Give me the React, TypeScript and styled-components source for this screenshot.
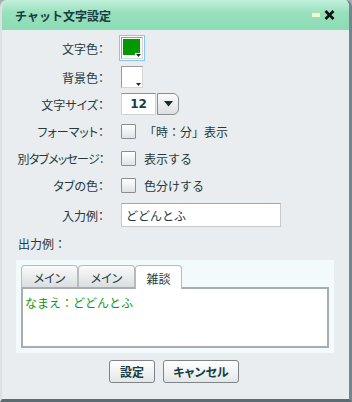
import * as React from "react";
import styled, { createGlobalStyle, css } from "styled-components";

const GlobalStyle = createGlobalStyle`
  html, body {
    margin: 0;
    padding: 0;
    background: #a2b0b4;
  }
  body {
    font-family: "Noto Sans CJK JP", "DejaVu Sans", sans-serif;
    font-size: 12px;
    color: #253a40;
  }
`;

const Window = styled.div`
  width: 352px;
  height: 402px;
  box-sizing: border-box;
  display: flex;
  flex-direction: column;
  background: #e9edf0;
  border-left: 2px solid #dde1e3;
  border-right: 3px solid #74858c;
  border-bottom: 3px solid #5b6b72;
  border-radius: 7px 7px 0 0;
  overflow: hidden;
`;

const TitleBar = styled.div`
  height: 30px;
  flex-shrink: 0;
  display: flex;
  align-items: center;
  padding: 1px 14px 0 13px;
  box-sizing: border-box;
  background: linear-gradient(#c2f0dc, #98e0bc 45%, #8cdcb4);
  border-bottom: 1px solid #9cd6b6;
`;

const Title = styled.div`
  flex: 1;
  font-size: 12px;
  font-weight: bold;
  color: #173c44;
`;

const Minimize = styled.div`
  width: 8px;
  height: 4px;
  background: #f6f8cc;
  margin-right: 4px;
`;

const Body = styled.div`
  display: flex;
  flex-direction: column;
  padding-top: 3px;
`;

const Form = styled.div`
  display: grid;
  grid-template-columns: 102px 1fr;
  column-gap: 17px;
`;

const Label = styled.div<{ $h: number; $tight?: boolean }>`
  height: ${(p) => p.$h}px;
  display: flex;
  align-items: center;
  justify-content: flex-end;
  white-space: nowrap;
  font-feature-settings: "palt";
  letter-spacing: ${(p) => (p.$tight ? "-0.8px" : "0")};
`;

const Field = styled.div<{ $h: number }>`
  height: ${(p) => p.$h}px;
  display: flex;
  align-items: center;
  gap: 8px;
`;

const Swatch = styled.div<{ $focused?: boolean }>`
  position: relative;
  width: 22px;
  height: 22px;
  box-sizing: border-box;
  border: 1px solid;
  border-color: #9a9a9a #d6d6d6 #d6d6d6 #9a9a9a;
  background: #fff;
  padding: 1px 2px 3px 1px;
  ${(p) =>
    p.$focused &&
    css`
      box-shadow: 0 0 0 1px #fff, 0 0 0 2px #86c6f2;
    `}
`;

const SwatchFill = styled.div<{ $color: string }>`
  width: 100%;
  height: 100%;
  background: ${(p) => p.$color};
`;

const SwatchArrow = styled.div`
  position: absolute;
  right: 0;
  bottom: 0;
  width: 7px;
  height: 5px;
  background: #fff;
  display: flex;
  align-items: center;
  justify-content: center;
`;

const Select = styled.div`
  display: flex;
  height: 22px;
`;

const SelectValue = styled.div`
  width: 35px;
  box-sizing: border-box;
  background: #fff;
  border: 1px solid #cfd3d5;
  border-top-color: #8e9294;
  display: flex;
  align-items: center;
  justify-content: center;
  font-family: "DejaVu Sans", sans-serif;
  font-weight: bold;
  font-size: 12px;
  color: #173c44;
`;

const SelectButton = styled.div`
  width: 22px;
  box-sizing: border-box;
  margin-left: 1px;
  border: 1px solid #8a8e90;
  border-radius: 0 6px 6px 0;
  background: linear-gradient(#fbfbfb, #dcdfe0);
  display: flex;
  align-items: center;
  justify-content: center;
`;

const Checkbox = styled.div`
  width: 15px;
  height: 15px;
  box-sizing: border-box;
  border: 1px solid #8a8e90;
  border-radius: 1px;
  background: linear-gradient(#ffffff, #dfe2e4);
`;

const TextInput = styled.div`
  width: 160px;
  height: 24px;
  box-sizing: border-box;
  background: #fff;
  border: 1px solid #c6cacc;
  border-top-color: #a4a8aa;
  display: flex;
  align-items: center;
  padding-left: 4px;
`;

const OutputLabel = styled.div`
  height: 24px;
  display: flex;
  align-items: center;
  padding-left: 16px;
`;

const Preview = styled.div`
  margin: 5px 15px 0 14px;
  padding: 5px;
  background: #f2fafc;
  display: flex;
  flex-direction: column;
`;

const Tabs = styled.div`
  display: flex;
  height: 22px;
`;

const Tab = styled.div<{ $active?: boolean; $w: number }>`
  width: ${(p) => p.$w}px;
  box-sizing: border-box;
  border: 1px solid #b4bcc0;
  border-bottom: none;
  border-radius: 4px 4px 0 0;
  display: flex;
  align-items: center;
  justify-content: center;
  padding-top: 1px;
  font-feature-settings: "palt";
  background: ${(p) => (p.$active ? "#fff" : "linear-gradient(#fafbfb, #dadee0)")};
  position: relative;
  z-index: ${(p) => (p.$active ? 1 : 0)};
  margin-bottom: ${(p) => (p.$active ? "-2px" : "0")};
  height: ${(p) => (p.$active ? 24 : 22)}px;
`;

const PreviewBox = styled.div`
  height: 61px;
  box-sizing: border-box;
  border: 2px solid #a6aeb2;
  background: #fff;
  padding: 5px 2px;
  color: #0f980f;
  font-size: 12px;
`;

const ButtonRow = styled.div`
  display: flex;
  justify-content: center;
  gap: 8px;
  margin-top: 7px;
  padding-right: 3px;
`;

const Button = styled.div<{ $w: number }>`
  width: ${(p) => p.$w}px;
  height: 23px;
  box-sizing: border-box;
  border: 1px solid #7d8386;
  border-radius: 3px;
  background: linear-gradient(#ffffff, #e4e7e9);
  display: flex;
  align-items: center;
  justify-content: center;
  color: #173c44;
  font-weight: bold;
  font-feature-settings: "palt";
`;

const DownTriangle = ({ size }: { size: number }) => (
  <svg width={size} height={size * 0.6} viewBox="0 0 10 6">
    <path d="M0 0 L10 0 L5 6 Z" fill="#1c2a2e" />
  </svg>
);

const CloseIcon = () => (
  <svg width="11" height="10" viewBox="0 0 11 10">
    <path d="M1.5 1 L9.5 9 M9.5 1 L1.5 9" stroke="#111" strokeWidth="2.6" />
  </svg>
);

const rows: { label: string; h: number; tight?: boolean; field: React.ReactNode }[] = [
  {
    label: "文字色：",
    h: 30,
    field: (
      <Swatch $focused>
        <SwatchFill $color="#009900" />
        <SwatchArrow>
          <DownTriangle size={5} />
        </SwatchArrow>
      </Swatch>
    ),
  },
  {
    label: "背景色：",
    h: 28,
    field: (
      <Swatch>
        <SwatchFill $color="#ffffff" />
        <SwatchArrow>
          <DownTriangle size={5} />
        </SwatchArrow>
      </Swatch>
    ),
  },
  {
    label: "文字サイズ：",
    h: 26,
    field: (
      <Select>
        <SelectValue>12</SelectValue>
        <SelectButton>
          <DownTriangle size={9} />
        </SelectButton>
      </Select>
    ),
  },
  {
    label: "フォーマット：",
    h: 28,
    field: (
      <>
        <Checkbox />
        <span>「時：分」表示</span>
      </>
    ),
  },
  {
    label: "別タブメッセージ：",
    h: 27,
    tight: true,
    field: (
      <>
        <Checkbox />
        <span>表示する</span>
      </>
    ),
  },
  {
    label: "タブの色：",
    h: 27,
    field: (
      <>
        <Checkbox />
        <span>色分けする</span>
      </>
    ),
  },
  {
    label: "入力例：",
    h: 32,
    field: <TextInput>どどんとふ</TextInput>,
  },
];

export default function App() {
  return (
    <>
      <GlobalStyle />
      <Window>
        <TitleBar>
          <Title>チャット文字設定</Title>
          <Minimize />
          <CloseIcon />
        </TitleBar>
        <Body>
          <Form>
            {rows.map((r) => (
              <React.Fragment key={r.label}>
                <Label $h={r.h} $tight={r.tight}>
                  {r.label}
                </Label>
                <Field $h={r.h}>{r.field}</Field>
              </React.Fragment>
            ))}
          </Form>
          <OutputLabel>出力例：</OutputLabel>
          <Preview>
            <Tabs>
              <Tab $w={57}>メイン</Tab>
              <Tab $w={57}>メイン</Tab>
              <Tab $w={47} $active>
                雑談
              </Tab>
            </Tabs>
            <PreviewBox>なまえ：どどんとふ</PreviewBox>
          </Preview>
          <ButtonRow>
            <Button $w={46}>設定</Button>
            <Button $w={76}>キャンセル</Button>
          </ButtonRow>
        </Body>
      </Window>
    </>
  );
}
